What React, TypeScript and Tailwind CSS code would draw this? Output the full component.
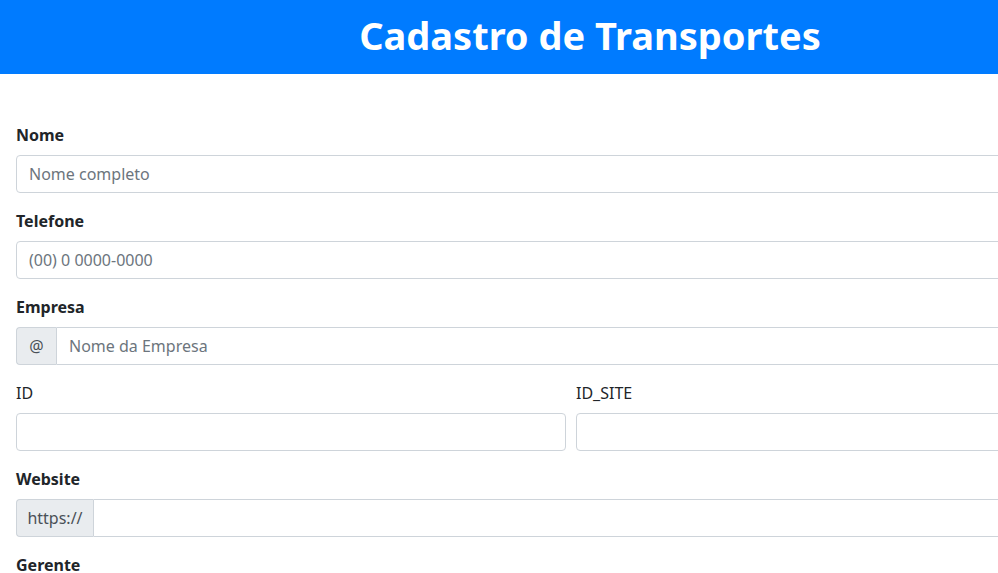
export default function App() {
  const font = { fontFamily: '"Noto Sans", "Open Sans", sans-serif' };
  const input =
    "block h-[38px] w-full rounded border border-[#ced4da] bg-white px-3 text-base text-[#495057] placeholder:text-[#6c757d] outline-none";
  return (
    <div className="w-[1180px] bg-white text-[#212529]" style={font}>
      <header className="flex h-[74px] items-center justify-center bg-[#007bff] pb-1">
        <h1 className="text-[38px] font-bold leading-none text-white">Cadastro de Transportes</h1>
      </header>

      <form className="w-[1126px] pl-4 pt-[49px]">
        <div className="mb-4">
          <label className="mb-2 block text-base font-bold leading-6">Nome</label>
          <input className={input} placeholder="Nome completo" />
        </div>
        <div className="mb-4">
          <label className="mb-2 block text-base font-bold leading-6">Telefone</label>
          <input className={input} placeholder="(00) 0 0000-0000" />
        </div>
        <div className="mb-4">
          <label className="mb-2 block text-base font-bold leading-6">Empresa</label>
          <div className="flex">
            <span className="flex h-[38px] w-10 shrink-0 items-center justify-center rounded-l border border-r-0 border-[#ced4da] bg-[#e9ecef] text-base text-[#495057]">
              @
            </span>
            <input className={input + " rounded-l-none"} placeholder="Nome da Empresa" />
          </div>
        </div>
        <div className="mb-4 grid grid-cols-2 gap-[10px]">
          <div>
            <label className="mb-2 block text-base leading-6">ID</label>
            <input className={input} />
          </div>
          <div>
            <label className="mb-2 block text-base leading-6">ID_SITE</label>
            <input className={input} />
          </div>
        </div>
        <div className="mb-4">
          <label className="mb-2 block text-base font-bold leading-6">Website</label>
          <div className="flex">
            <span className="flex h-[38px] w-[77px] shrink-0 items-center justify-center rounded-l border border-r-0 border-[#ced4da] bg-[#e9ecef] text-base text-[#495057]">
              https://
            </span>
            <input className={input + " rounded-l-none"} />
          </div>
        </div>
        <div className="mb-4">
          <label className="mb-2 block text-base font-bold leading-6">Gerente</label>
          <input className={input} />
        </div>
      </form>
    </div>
  );
}
